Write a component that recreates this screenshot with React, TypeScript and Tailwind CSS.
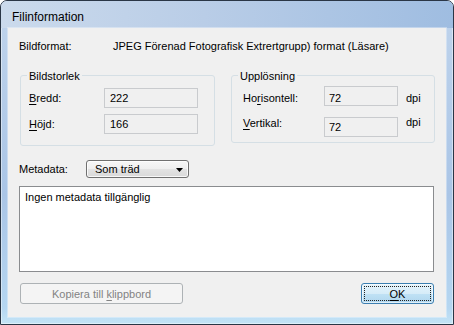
import React from "react";

const U = ({ children }: { children: React.ReactNode }) => (
  <span className="underline underline-offset-[2px] decoration-[1px]">{children}</span>
);

export default function App() {
  return (
    <div className="w-[454px] h-[325px] bg-white overflow-hidden font-['Liberation_Sans',Arial,sans-serif] text-black">
      <div className="w-full h-full flex flex-col rounded-t-[7px] border border-[#2a3646] bg-[linear-gradient(to_bottom,#c0d4ec_0%,#aac5e6_60%,#b5d6f1_95%,#c4e4f6_100%)] shadow-[inset_0_0_0_1px_rgba(255,255,255,0.45)]">
        {/* Title bar */}
        <div className="h-[27px] shrink-0 flex items-center pl-[11px] pt-[4px] text-[12px] rounded-t-[6px] bg-[linear-gradient(to_right,#cbdaec_0%,#b9cde7_45%,#9fbde1_100%)]">
          Filinformation
        </div>
        {/* Frame + client */}
        <div className="flex-1 flex px-[7px] pb-[7px]">
          <div className="flex-1 flex flex-col bg-[#f0f0f0] text-[11px] leading-[14px] shadow-[0_0_0_1px_rgba(255,255,255,0.35)]">
            {/* Bildformat row */}
            <div className="flex pt-[11px] pl-[11px] h-[25px]">
              <div className="w-[94px]">Bildformat:</div>
              <div>JPEG Förenad Fotografisk Extrertgrupp) format (Läsare)</div>
            </div>

            {/* Groups */}
            <div className="flex items-start mt-[22px] pl-[12px] gap-[16px]">
              {/* Bildstorlek */}
              <div className="relative w-[195px] h-[71px] border border-[#d5dfe5] rounded-[3px] pt-[12px] pl-[8px] flex flex-col gap-[6px]">
                <div className="absolute -top-[7px] left-[6px] px-[2px] bg-[#f0f0f0]">Bildstorlek</div>
                <div className="flex items-center h-[20px]">
                  <div className="w-[75px]"><U>B</U>redd:</div>
                  <div className="w-[94px] h-[20px] border border-[#c9cbce] bg-[#f0f0f0] pl-[5px] flex items-center">222</div>
                </div>
                <div className="flex items-center h-[20px]">
                  <div className="w-[75px]"><U>H</U>öjd:</div>
                  <div className="w-[94px] h-[20px] border border-[#c9cbce] bg-[#f0f0f0] pl-[5px] flex items-center">166</div>
                </div>
              </div>

              {/* Upplösning */}
              <div className="relative w-[204px] h-[68px] border border-[#d5dfe5] rounded-[3px] pt-[10px] pl-[11px] flex flex-col gap-[11px]">
                <div className="absolute -top-[7px] left-[6px] px-[2px] bg-[#f0f0f0]">Upplösning</div>
                <div className="flex items-start h-[20px]">
                  <div className="w-[81px] mt-[5px]">Ho<U>r</U>isontell:</div>
                  <div className="w-[74px] h-[20px] border border-[#c9cbce] bg-[#f0f0f0] pl-[4px] pt-[4px]">72</div>
                  <div className="ml-[8px] mt-[5px]">dpi</div>
                </div>
                <div className="flex items-start h-[20px]">
                  <div className="w-[81px] -mt-[1px]"><U>V</U>ertikal:</div>
                  <div className="w-[74px] h-[20px] border border-[#c9cbce] bg-[#f0f0f0] pl-[4px] pt-[2px]">72</div>
                  <div className="ml-[8px] -mt-[2px]">dpi</div>
                </div>
              </div>
            </div>

            {/* Metadata row */}
            <div className="flex items-center mt-[14px] pl-[11px] h-[18px]">
              <div className="w-[67px]">Metadata:</div>
              <div className="w-[103px] h-[18px] border border-[#707070] rounded-[3px] bg-[linear-gradient(to_bottom,#f7f7f7_0%,#efefef_50%,#e3e3e3_50%,#d9d9d9_100%)] flex items-center pl-[8px] pr-[5px] shadow-[inset_0_0_0_1px_rgba(255,255,255,0.8)]">
                <span className="flex-1">Som träd</span>
                <svg width="7" height="4" viewBox="0 0 7 4" className="mt-[1px]">
                  <path d="M0 0 H7 L3.5 4 Z" fill="#000" />
                </svg>
              </div>
            </div>

            {/* Text area */}
            <div className="mt-[8px] ml-[11px] w-[415px] h-[86px] bg-white border border-[#8a8c8f] pl-[5px] pt-[3px]">
              Ingen metadata tillgänglig
            </div>

            {/* Buttons */}
            <div className="flex items-start mt-[11px] pl-[12px]">
              <div className="w-[163px] h-[21px] border border-[#adb2b5] rounded-[3px] bg-[#f4f4f4] text-[#838383] flex items-center justify-center">
                <span>Kopiera till <U>k</U>lippbord</span>
              </div>
              <div className="ml-[178px] w-[73px] h-[21px] border border-[#3c7fb1] rounded-[3px] bg-[linear-gradient(to_bottom,#e5f4fc_0%,#d6ecf8_50%,#c0e2f5_50%,#b0d6ee_100%)] p-[2px] shadow-[inset_0_0_0_1px_rgba(255,255,255,0.6)]">
                <div className="w-full h-full border border-dotted border-[#222] flex items-center justify-center">
                  <span><U>O</U>K</span>
                </div>
              </div>
            </div>
          </div>
        </div>
      </div>
    </div>
  );
}
